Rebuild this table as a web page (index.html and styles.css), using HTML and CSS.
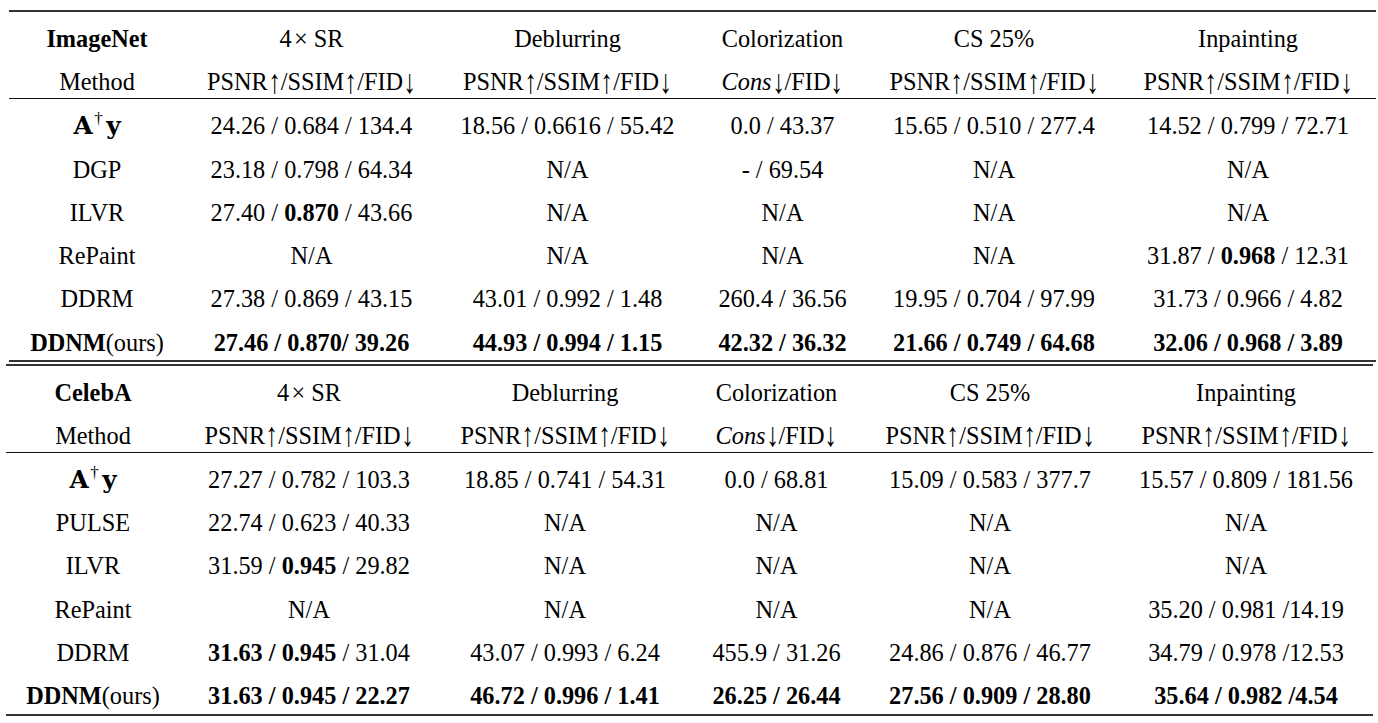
FILE: index.html
```html
<!DOCTYPE html>
<html>
<head>
<meta charset="utf-8">
<link rel="stylesheet" href="styles.css">
</head>
<body>
<table class="t ta">
  <colgroup><col><col><col><col><col><col></colgroup>
  <tr class="r-top">
    <td><b>ImageNet</b></td>
    <td>4<span class="x">×</span> SR</td>
    <td>Deblurring</td>
    <td>Colorization</td>
    <td>CS 25%</td>
    <td>Inpainting</td>
  </tr>
  <tr class="r-hd">
    <td>Method</td>
    <td>PSNR<span class="ar">↑</span>/SSIM<span class="ar">↑</span>/FID<span class="ar">↓</span></td>
    <td>PSNR<span class="ar">↑</span>/SSIM<span class="ar">↑</span>/FID<span class="ar">↓</span></td>
    <td><i>Cons</i><span class="ar">↓</span>/FID<span class="ar">↓</span></td>
    <td>PSNR<span class="ar">↑</span>/SSIM<span class="ar">↑</span>/FID<span class="ar">↓</span></td>
    <td>PSNR<span class="ar">↑</span>/SSIM<span class="ar">↑</span>/FID<span class="ar">↓</span></td>
  </tr>
  <tr class="r-first">
    <td><span class="m">A</span><span class="dg">†</span><span class="m">y</span></td>
    <td>24.26 / 0.684 / 134.4</td>
    <td>18.56 / 0.6616 / 55.42</td>
    <td>0.0 / 43.37</td>
    <td>15.65 / 0.510 / 277.4</td>
    <td>14.52 / 0.799 / 72.71</td>
  </tr>
  <tr>
    <td>DGP</td>
    <td>23.18 / 0.798 / 64.34</td>
    <td>N/A</td>
    <td>- / 69.54</td>
    <td>N/A</td>
    <td>N/A</td>
  </tr>
  <tr>
    <td>ILVR</td>
    <td>27.40 / <b>0.870</b> / 43.66</td>
    <td>N/A</td>
    <td>N/A</td>
    <td>N/A</td>
    <td>N/A</td>
  </tr>
  <tr>
    <td>RePaint</td>
    <td>N/A</td>
    <td>N/A</td>
    <td>N/A</td>
    <td>N/A</td>
    <td>31.87 / <b>0.968</b> / 12.31</td>
  </tr>
  <tr>
    <td>DDRM</td>
    <td>27.38 / 0.869 / 43.15</td>
    <td>43.01 / 0.992 / 1.48</td>
    <td>260.4 / 36.56</td>
    <td>19.95 / 0.704 / 97.99</td>
    <td>31.73 / 0.966 / 4.82</td>
  </tr>
  <tr class="r-last">
    <td><b>DDNM</b>(ours)</td>
    <td><b>27.46 / 0.870/ 39.26</b></td>
    <td><b>44.93 / 0.994 / 1.15</b></td>
    <td><b>42.32 / 36.32</b></td>
    <td><b>21.66 / 0.749 / 64.68</b></td>
    <td><b>32.06 / 0.968 / 3.89</b></td>
  </tr>
</table>

<table class="t tb">
  <colgroup><col><col><col><col><col><col></colgroup>
  <tr class="r-top">
    <td><b>CelebA</b></td>
    <td>4<span class="x">×</span> SR</td>
    <td>Deblurring</td>
    <td>Colorization</td>
    <td>CS 25%</td>
    <td>Inpainting</td>
  </tr>
  <tr class="r-hd">
    <td>Method</td>
    <td>PSNR<span class="ar">↑</span>/SSIM<span class="ar">↑</span>/FID<span class="ar">↓</span></td>
    <td>PSNR<span class="ar">↑</span>/SSIM<span class="ar">↑</span>/FID<span class="ar">↓</span></td>
    <td><i>Cons</i><span class="ar">↓</span>/FID<span class="ar">↓</span></td>
    <td>PSNR<span class="ar">↑</span>/SSIM<span class="ar">↑</span>/FID<span class="ar">↓</span></td>
    <td>PSNR<span class="ar">↑</span>/SSIM<span class="ar">↑</span>/FID<span class="ar">↓</span></td>
  </tr>
  <tr class="r-first">
    <td><span class="m">A</span><span class="dg">†</span><span class="m">y</span></td>
    <td>27.27 / 0.782 / 103.3</td>
    <td>18.85 / 0.741 / 54.31</td>
    <td>0.0 / 68.81</td>
    <td>15.09 / 0.583 / 377.7</td>
    <td>15.57 / 0.809 / 181.56</td>
  </tr>
  <tr>
    <td>PULSE</td>
    <td>22.74 / 0.623 / 40.33</td>
    <td>N/A</td>
    <td>N/A</td>
    <td>N/A</td>
    <td>N/A</td>
  </tr>
  <tr>
    <td>ILVR</td>
    <td>31.59 / <b>0.945</b> / 29.82</td>
    <td>N/A</td>
    <td>N/A</td>
    <td>N/A</td>
    <td>N/A</td>
  </tr>
  <tr>
    <td>RePaint</td>
    <td>N/A</td>
    <td>N/A</td>
    <td>N/A</td>
    <td>N/A</td>
    <td>35.20 / 0.981 /14.19</td>
  </tr>
  <tr>
    <td>DDRM</td>
    <td><b>31.63 / 0.945</b> / 31.04</td>
    <td>43.07 / 0.993 / 6.24</td>
    <td>455.9 / 31.26</td>
    <td>24.86 / 0.876 / 46.77</td>
    <td>34.79 / 0.978 /12.53</td>
  </tr>
  <tr class="r-last">
    <td><b>DDNM</b>(ours)</td>
    <td><b>31.63 / 0.945 / 22.27</b></td>
    <td><b>46.72 / 0.996 / 1.41</b></td>
    <td><b>26.25 / 26.44</b></td>
    <td><b>27.56 / 0.909 / 28.80</b></td>
    <td><b>35.64 / 0.982 /4.54</b></td>
  </tr>
</table>
</body>
</html>
```

FILE: styles.css
```css
html, body {
  margin: 0;
  padding: 0;
  background: #ffffff;
}

body {
  font-family: "Liberation Serif", "Times New Roman", serif;
  color: #000000;
  width: 1378px;
  height: 723px;
  overflow: hidden;
}

.t {
  border-collapse: separate;
  border-spacing: 0;
  table-layout: fixed;
  width: 1367px;
  font-size: 24.3px;
}

.ta {
  margin: 10px 0 0 9px;
}

.tb {
  margin: 1.5px 0 0 6px;
}

.ta col:nth-child(1) { width: 176px; }
.ta col:nth-child(2) { width: 253px; }
.ta col:nth-child(3) { width: 259px; }
.ta col:nth-child(4) { width: 171px; }
.ta col:nth-child(5) { width: 252px; }
.ta col:nth-child(6) { width: 256px; }

.tb col:nth-child(1) { width: 174px; }
.tb col:nth-child(2) { width: 258px; }
.tb col:nth-child(3) { width: 254px; }
.tb col:nth-child(4) { width: 169px; }
.tb col:nth-child(5) { width: 258px; }
.tb col:nth-child(6) { width: 254px; }

.t td {
  padding: 12px 0 3.3px;
  line-height: 28px;
  text-align: center;
  white-space: nowrap;
  vertical-align: top;
}

.t b {
  font-weight: 700;
}

.r-top td {
  border-top: 2px solid #333333;
  padding-top: 13px;
}

.r-hd td {
  padding-bottom: 2px;
  border-bottom: 1px solid #111111;
}

.r-first td {
  padding-top: 13px;
}

.r-last td {
  border-bottom: 2px solid #333333;
}

.x {
  margin-left: 0.1em;
}

.ar {
  display: inline-block;
  font-size: 1.4em;
  font-weight: 400;
  line-height: 0;
  vertical-align: -0.07em;
  transform: scaleX(0.75);
  margin: 0 -0.06em;
}

.m {
  font-family: "DejaVu Serif", "Liberation Serif", serif;
  font-weight: 700;
  font-size: 1.02em;
}

.dg {
  font-size: 0.7em;
  vertical-align: 0.6em;
  line-height: 0;
  margin: 0 0.2em 0 0.1em;
}
```
